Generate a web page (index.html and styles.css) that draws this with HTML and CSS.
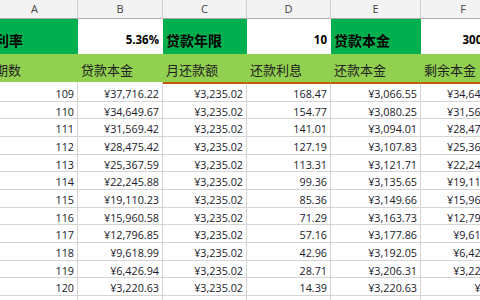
FILE: index.html
```html
<!DOCTYPE html>
<html lang="zh">
<head>
<meta charset="utf-8">
<link rel="stylesheet" href="styles.css">
</head>
<body>
<div class="sheet">
  <div class="ch">A</div><div class="ch">B</div><div class="ch">C</div><div class="ch">D</div><div class="ch">E</div><div class="ch">F</div>

  <div class="lab">利率</div><div class="val">5.36%</div><div class="lab">贷款年限</div><div class="val">10</div><div class="lab">贷款本金</div><div class="val">300000</div>

  <div class="th">期数</div><div class="th">贷款本金</div><div class="th or">月还款额</div><div class="th or">还款利息</div><div class="th or">还款本金</div><div class="th or">剩余本金</div>

  <div class="c">109</div><div class="c">¥37,716.22</div><div class="c">¥3,235.02</div><div class="c">168.47</div><div class="c">¥3,066.55</div><div class="c">¥34,649.67</div>
  <div class="c">110</div><div class="c">¥34,649.67</div><div class="c">¥3,235.02</div><div class="c">154.77</div><div class="c">¥3,080.25</div><div class="c">¥31,569.42</div>
  <div class="c">111</div><div class="c">¥31,569.42</div><div class="c">¥3,235.02</div><div class="c">141.01</div><div class="c">¥3,094.01</div><div class="c">¥28,475.42</div>
  <div class="c">112</div><div class="c">¥28,475.42</div><div class="c">¥3,235.02</div><div class="c">127.19</div><div class="c">¥3,107.83</div><div class="c">¥25,367.59</div>
  <div class="c">113</div><div class="c">¥25,367.59</div><div class="c">¥3,235.02</div><div class="c">113.31</div><div class="c">¥3,121.71</div><div class="c">¥22,245.88</div>
  <div class="c">114</div><div class="c">¥22,245.88</div><div class="c">¥3,235.02</div><div class="c">99.36</div><div class="c">¥3,135.65</div><div class="c">¥19,110.23</div>
  <div class="c">115</div><div class="c">¥19,110.23</div><div class="c">¥3,235.02</div><div class="c">85.36</div><div class="c">¥3,149.66</div><div class="c">¥15,960.58</div>
  <div class="c">116</div><div class="c">¥15,960.58</div><div class="c">¥3,235.02</div><div class="c">71.29</div><div class="c">¥3,163.73</div><div class="c">¥12,796.85</div>
  <div class="c">117</div><div class="c">¥12,796.85</div><div class="c">¥3,235.02</div><div class="c">57.16</div><div class="c">¥3,177.86</div><div class="c">¥9,618.99</div>
  <div class="c">118</div><div class="c">¥9,618.99</div><div class="c">¥3,235.02</div><div class="c">42.96</div><div class="c">¥3,192.05</div><div class="c">¥6,426.94</div>
  <div class="c">119</div><div class="c">¥6,426.94</div><div class="c">¥3,235.02</div><div class="c">28.71</div><div class="c">¥3,206.31</div><div class="c">¥3,220.63</div>
  <div class="c">120</div><div class="c">¥3,220.63</div><div class="c">¥3,235.02</div><div class="c">14.39</div><div class="c">¥3,220.63</div><div class="c">¥0.00</div>
  <div class="c"></div><div class="c"></div><div class="c"></div><div class="c"></div><div class="c"></div><div class="c"></div>
</div>
</body>
</html>
```

FILE: styles.css
```css
html, body {
  margin: 0;
  padding: 0;
  background: #fff;
  width: 480px;
  height: 300px;
  overflow: hidden;
}

.sheet {
  display: grid;
  grid-template-columns: 86px 85px 84px 84px 90px 85px;
  grid-template-rows: 19px 35px 30px repeat(13, 17.67px);
  margin-left: -8px;
  width: 514px;
  font-family: "Open Sans", "Liberation Sans", sans-serif;
}

.sheet > div {
  box-sizing: border-box;
  border-right: 1px solid #d4d4d4;
  border-bottom: 1px solid #d4d4d4;
  white-space: nowrap;
  overflow: hidden;
}

.ch {
  background: #f3f3f3;
  border-right-color: #d0d0d0 !important;
  border-bottom-color: #ababab !important;
  color: #444;
  font-size: 11px;
  line-height: 18px;
  text-align: center;
}

.lab {
  background: #00b050;
  border-color: #00b050 !important;
  color: #000;
  font-family: "Noto Sans CJK SC", sans-serif;
  font-weight: 700;
  font-size: 14px;
  display: flex;
  align-items: flex-end;
  padding: 0 0 4px 3px;
  line-height: 18px;
}

.val {
  background: #fff;
  border-color: #fff !important;
  color: #000;
  font-weight: 700;
  font-size: 11.5px;
  display: flex;
  align-items: flex-end;
  justify-content: flex-end;
  padding: 0 3px 5px 0;
  line-height: 16px;
}

.th {
  background: #92d050;
  border-right-color: #92d050 !important;
  border-bottom: 2px solid #ffffff !important;
  color: #222;
  font-family: "Noto Sans CJK SC", sans-serif;
  font-size: 13px;
  display: flex;
  align-items: flex-end;
  padding: 0 0 3px 3px;
  line-height: 18px;
}

.th.or {
  border-bottom: 2px solid #c65911 !important;
}

.c {
  color: #1a1a2a;
  font-size: 10.8px;
  text-align: right;
  padding-right: 3px;
  line-height: 17px;
  padding-top: 1px;
}
```
